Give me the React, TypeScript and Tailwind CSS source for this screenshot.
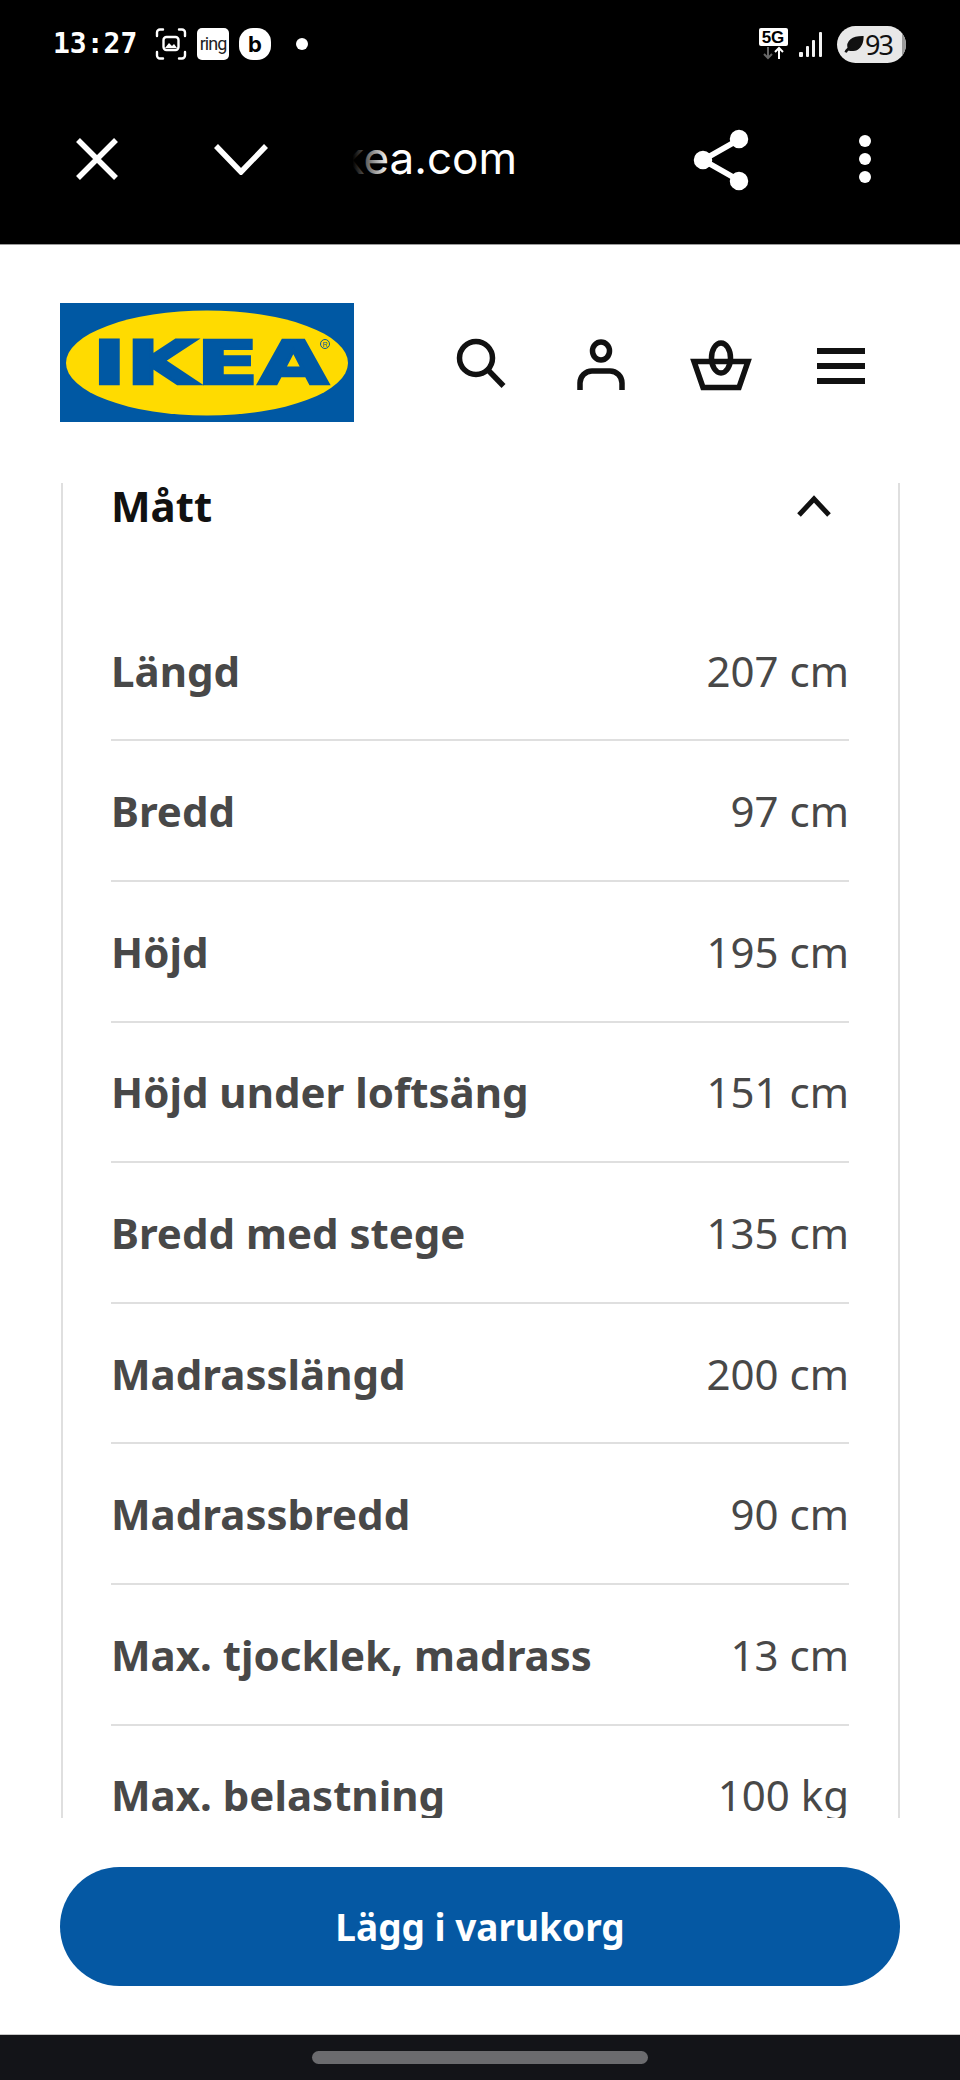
import React from "react";

const rows: [string, string][] = [
  ["Längd", "207 cm"],
  ["Bredd", "97 cm"],
  ["Höjd", "195 cm"],
  ["Höjd under loftsäng", "151 cm"],
  ["Bredd med stege", "135 cm"],
  ["Madrasslängd", "200 cm"],
  ["Madrassbredd", "90 cm"],
  ["Max. tjocklek, madrass", "13 cm"],
  ["Max. belastning", "100 kg"],
];

function StatusBar() {
  return (
    <div className="flex h-[88px] items-center pl-[53px] pr-[54px] text-white">
      <span className="w-[84px] text-[28px] leading-none font-bold font-['DejaVu_Sans_Mono',monospace]">13:27</span>
      <svg className="ml-[18px]" width="32" height="32" viewBox="0 0 32 32" fill="none" stroke="#fff" strokeWidth="2.4" strokeLinecap="round">
        <path d="M2 8V4.500A3 3 0 0 1 5 1.500H8M24 1.500h3a3 3 0 0 1 3 3V8M30 24v3.500a3 3 0 0 1-3 3h-3M8 30.500H5a3 3 0 0 1-3-3V24" />
        <rect x="8.500" y="9" width="15" height="13" rx="3" />
        <path d="M10 20l4-5 3 3 2-2 3 4z" fill="#fff" stroke="none" />
      </svg>
      <span className="ml-[10px] flex h-[32px] w-[32px] items-center justify-center rounded-[5px] bg-white text-[18px] leading-none text-[#222] font-['Roboto',sans-serif] tracking-[-1px]">ring</span>
      <span className="ml-[10px] flex h-[32px] w-[32px] items-center justify-center rounded-[14px] bg-white text-[22px] leading-none font-bold text-black font-['Inter',sans-serif]">b</span>
      <span className="ml-[25px] h-[12px] w-[12px] rounded-full bg-white" />
      <div className="ml-auto flex w-[30px] flex-col items-center">
        <span className="flex h-[18px] w-[29px] items-center justify-center rounded-[2px] bg-white text-[17px] leading-none font-bold text-black font-['Liberation_Sans',sans-serif]">5G</span>
        <svg width="28" height="14" viewBox="0 0 28 14" fill="none" strokeWidth="2">
          <path d="M9 1v11M5 8l4 4 4-4" stroke="#666" />
          <path d="M20 13V2M16 6l4-4 4 4" stroke="#fff" />
        </svg>
      </div>
      <svg className="ml-[11px]" width="24" height="27" viewBox="0 0 24 27" fill="#f2f2f2">
        <rect x="0" y="21" width="4" height="5" rx="1" />
        <rect x="7" y="15" width="3" height="11" rx="1" />
        <rect x="13" y="9" width="3" height="17" rx="1" />
        <rect x="20" y="1" width="3" height="25" rx="1" />
      </svg>
      <div className="relative ml-[14px] flex h-[37px] w-[69px] items-center overflow-hidden rounded-full bg-[#e8e8e8] pl-[7px]">
        <svg width="20" height="20" viewBox="0 0 24 24" fill="#111" stroke="#111" strokeWidth="3">
          <path d="M2 22c1-3 3-4 5-6M6 18C3 9 11 4 22 4c0 10-6 15-11 15-2 0-4 0-5-1z" />
        </svg>
        <span className="ml-[1px] text-[27px] leading-none text-[#111] font-['Noto_Sans',sans-serif] tracking-[-2px]">93</span>
        <span className="absolute right-0 top-0 h-full w-[4px] bg-[#9a9a9a]" />
      </div>
    </div>
  );
}

function BrowserBar() {
  return (
    <div className="flex h-[156px] items-start pl-[76px] pt-[50px] text-white">
      <svg width="42" height="42" viewBox="0 0 42 42" stroke="#fff" strokeWidth="5.500">
        <path d="M2 2l38 38M40 2L2 40" />
      </svg>
      <svg className="ml-[96px] mt-[5px]" width="54" height="32" viewBox="0 0 54 32" fill="none" stroke="#fff" strokeWidth="5.500">
        <path d="M2 3l25 26L52 3" />
      </svg>
      <div className="relative ml-[81px] mt-[-7px] h-[54px] w-[175px]">
        <span className="absolute right-[7px] top-0 text-[44px] leading-[54px] font-['Inter',sans-serif] font-normal whitespace-nowrap">kea.com</span>
        <span className="absolute left-[-12px] top-0 h-full w-[52px] bg-gradient-to-r from-black from-[30%] to-transparent" />
      </div>
      <svg className="ml-[168px] mt-[-10px]" width="60" height="64" viewBox="0 0 60 64" fill="#fff" stroke="#fff" strokeWidth="5.500">
        <path d="M11 32L48 11M11 32l37 21" fill="none" />
        <circle cx="11" cy="32" r="6.500" />
        <circle cx="47" cy="11" r="6.500" />
        <circle cx="47" cy="53" r="6.500" />
      </svg>
      <svg className="ml-[107px] mt-[-3px]" width="12" height="48" viewBox="0 0 12 48" fill="#fff">
        <circle cx="6" cy="6" r="6" />
        <circle cx="6" cy="24" r="6" />
        <circle cx="6" cy="42" r="6" />
      </svg>
    </div>
  );
}

function Logo() {
  return (
    <svg width="294" height="119" viewBox="0 0 294 119" className="shrink-0">
      <rect width="294" height="119" fill="#0058a3" />
      <ellipse cx="147" cy="60" rx="141" ry="52.500" fill="#ffdb00" />
      <text x="32.500" y="80.500" fontFamily="'DejaVu Sans', sans-serif" fontWeight="700" fontSize="60" textLength="236" lengthAdjust="spacingAndGlyphs" fill="#0058a3" stroke="#0058a3" strokeWidth="2.500">IKEA</text>
      <circle cx="265" cy="41" r="4.500" fill="none" stroke="#0058a3" strokeWidth="1" />
      <text x="265" y="43.500" textAnchor="middle" fontFamily="'Liberation Sans', sans-serif" fontSize="7" fill="#0058a3">R</text>
    </svg>
  );
}

function Header() {
  return (
    <div className="flex h-[238px] items-center pb-[2px] pl-[60px]">
      <Logo />
      <div className="ml-[67px] flex">
        <div className="flex w-[120px] justify-center">
          <svg width="60" height="60" viewBox="0 0 60 60" fill="none" stroke="#111" strokeWidth="5.500">
            <circle cx="25" cy="25" r="16.500" />
            <path d="M37 37l15.500 16" />
          </svg>
        </div>
        <div className="flex w-[120px] justify-center">
          <svg width="60" height="60" viewBox="0 0 60 60" fill="none" stroke="#111" strokeWidth="5.500">
            <ellipse cx="30" cy="18" rx="8.500" ry="9" />
            <path d="M9 57V50A12 12 0 0 1 21 38H39A12 12 0 0 1 51 50V57" />
          </svg>
        </div>
        <div className="flex w-[120px] justify-center">
          <svg width="64" height="60" viewBox="0 0 64 60" fill="none" stroke="#111" strokeWidth="5.500">
            <path d="M5 28.500H59L50 54.500H14Z" />
            <ellipse cx="32" cy="25" rx="9.500" ry="15" />
          </svg>
        </div>
        <div className="flex w-[120px] justify-center">
          <svg width="48" height="60" viewBox="0 0 48 60" fill="#111">
            <rect x="0" y="15" width="48" height="6" />
            <rect x="0" y="30" width="48" height="6" />
            <rect x="0" y="45" width="48" height="6" />
          </svg>
        </div>
      </div>
    </div>
  );
}

function Dimensions() {
  return (
    <div className="ml-[61px] mr-[60px] h-[1336px] overflow-hidden border-x-2 border-[#dfdfdf] pl-[48px] pr-[49px] font-['Noto_Sans',sans-serif]">
      <div className="flex h-[47px] items-center justify-between pr-[17px]">
        <span className="text-[42px] font-bold leading-none text-[#111]">Mått</span>
        <svg width="36" height="24" viewBox="0 0 36 24" fill="none" stroke="#111" strokeWidth="5">
          <path d="M3 21L18 5l15 16" />
        </svg>
      </div>
      <div className="mt-[71px]">
        {rows.map(([label, value]) => (
          <div key={label} className="flex h-[140.6px] items-center justify-between border-b-2 border-[#dfdfdf] pt-[1px] text-[42px] leading-none text-[#484848]">
            <span className="font-bold">{label}</span>
            <span className="font-normal">{value}</span>
          </div>
        ))}
      </div>
    </div>
  );
}

export default function App() {
  return (
    <div className="flex h-[2080px] w-[960px] flex-col overflow-hidden bg-white">
      <div className="h-[245px] border-b border-[#9a9a9a] bg-black">
        <StatusBar />
        <BrowserBar />
      </div>
      <Header />
      <Dimensions />
      <button className="mx-[60px] mt-[49px] h-[119px] shrink-0 rounded-full bg-[#0558a3] text-[37px] font-bold text-white font-['Noto_Sans',sans-serif]">
        Lägg i varukorg
      </button>
      <div className="mt-[48px] flex h-[46px] shrink-0 justify-center border-t border-[#c8c8c8] bg-[#131418] pt-[16px]">
        <div className="h-[13px] w-[336px] rounded-full bg-[#6b6b6e]" />
      </div>
    </div>
  );
}
